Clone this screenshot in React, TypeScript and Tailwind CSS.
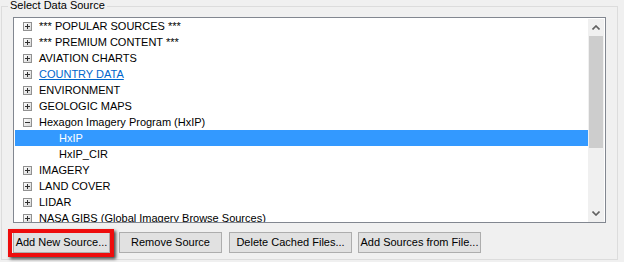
import React from "react";

type Item = { label: string; exp?: "+" | "-"; child?: boolean; selected?: boolean; link?: boolean };

const items: Item[] = [
  { label: "*** POPULAR SOURCES ***", exp: "+" },
  { label: "*** PREMIUM CONTENT ***", exp: "+" },
  { label: "AVIATION CHARTS", exp: "+" },
  { label: "COUNTRY DATA", exp: "+", link: true },
  { label: "ENVIRONMENT", exp: "+" },
  { label: "GEOLOGIC MAPS", exp: "+" },
  { label: "Hexagon Imagery Program (HxIP)", exp: "-" },
  { label: "HxIP", child: true, selected: true },
  { label: "HxIP_CIR", child: true },
  { label: "IMAGERY", exp: "+" },
  { label: "LAND COVER", exp: "+" },
  { label: "LIDAR", exp: "+" },
  { label: "NASA GIBS (Global Imagery Browse Sources)", exp: "+" },
];

function Expander({ open }: { open: boolean }) {
  return (
    <svg width="9" height="9" viewBox="0 0 9 9" className="shrink-0">
      <defs>
        <linearGradient id="eg" x1="0" y1="0" x2="1" y2="1">
          <stop offset="0" stopColor="#ffffff" />
          <stop offset="1" stopColor="#d4d4d4" />
        </linearGradient>
      </defs>
      <rect x="0.5" y="0.5" width="8" height="8" fill="url(#eg)" stroke="#919191" />
      <line x1="2" y1="4.5" x2="7" y2="4.5" stroke="#303030" />
      {!open && <line x1="4.5" y1="2" x2="4.5" y2="7" stroke="#303030" />}
    </svg>
  );
}

function Btn({ children, w, className = "" }: { children: React.ReactNode; w: string; className?: string }) {
  return (
    <div
      className={`h-[21px] ${w} ${className} flex items-center justify-center bg-[#e1e1e1] border border-[#adadad] text-[11px] text-black shrink-0`}
    >
      {children}
    </div>
  );
}

export default function App() {
  return (
    <div
      className="w-[624px] h-[262px] bg-[#f0f0f0] pl-[1px] pt-[6px] overflow-hidden"
      style={{ fontFamily: '"Liberation Sans", Arial, sans-serif' }}
    >
      <div className="relative w-[617px] h-[254px] border border-[#dcdcdc] pl-[11px] pt-[10px]">
        <div className="absolute left-[6px] top-[-8px] bg-[#f0f0f0] px-[2px] text-[11px] leading-[13px] text-black">
          Select Data Source
        </div>
        <div className="w-[593px] h-[206px] border border-[#828790] bg-white flex overflow-hidden">
          <div className="flex-1 overflow-hidden">
            {items.map((it, i) => (
              <div
                key={i}
                className={`h-[16px] flex items-center text-[11px] whitespace-nowrap ${
                  it.selected ? "bg-[#3399ff] text-white ml-[1px]" : "text-black"
                } ${it.child ? (it.selected ? "pl-[44px]" : "pl-[45px]") : "pl-[9px]"}`}
              >
                {it.exp && <Expander open={it.exp === "-"} />}
                <span
                  className={`${it.exp ? "ml-[7px]" : ""} ${it.link ? "text-[#0066cc] underline" : ""}`}
                >
                  {it.label}
                </span>
              </div>
            ))}
          </div>
          <div className="w-[16px] mr-[1px] mt-[1px] bg-[#f0f0f0] flex flex-col">
            <div className="h-[17px] flex items-center justify-center">
              <svg width="8" height="5" viewBox="0 0 8 5">
                <path d="M0.5 4.5 L4 1 L7.5 4.5" fill="none" stroke="#606060" strokeWidth="1.6" />
              </svg>
            </div>
            <div className="h-[112px] bg-[#cdcdcd] mx-[1px]" />
            <div className="flex-1" />
            <div className="h-[17px] flex items-center justify-center">
              <svg width="8" height="5" viewBox="0 0 8 5">
                <path d="M0.5 0.5 L4 4 L7.5 0.5" fill="none" stroke="#606060" strokeWidth="1.6" />
              </svg>
            </div>
          </div>
        </div>
        <div className="flex mt-[9px] ml-[0px]">
          <div className="relative">
            <Btn w="w-[97px]">Add New Source...</Btn>
            <div className="absolute left-[-5px] top-[-3px] w-[106px] h-[28px] border-[4px] border-[#ee0d0d] shadow-[2px_2px_3px_rgba(0,0,0,0.7)]" />
          </div>
          <Btn w="w-[103px]" className="ml-[9px]">Remove Source</Btn>
          <Btn w="w-[123px]" className="ml-[7px]">Delete Cached Files...</Btn>
          <Btn w="w-[123px]" className="ml-[6px]">Add Sources from File...</Btn>
        </div>
      </div>
    </div>
  );
}
